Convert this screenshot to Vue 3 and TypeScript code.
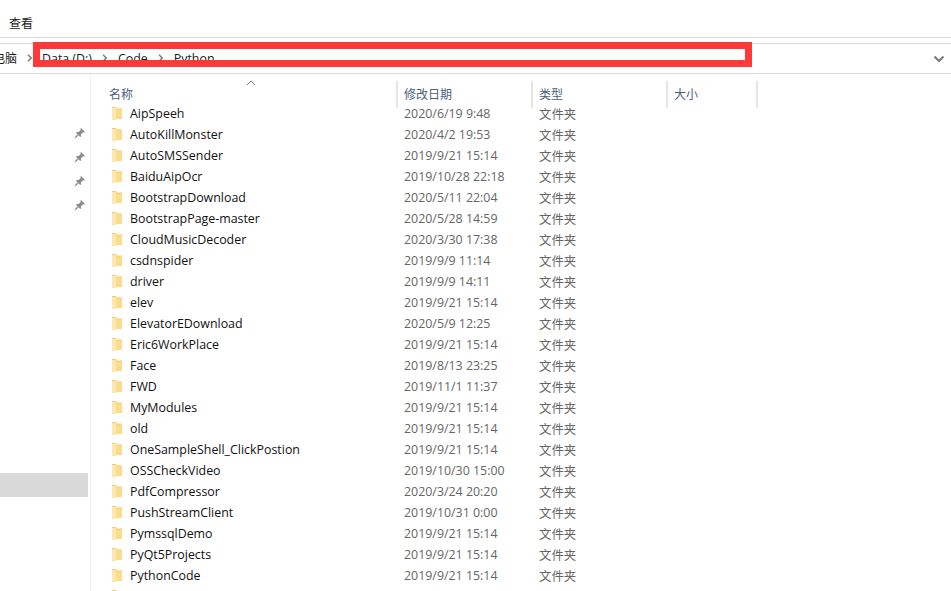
<script setup lang="ts">
const folders: { name: string; date: string }[] = [
  { name: 'AipSpeeh', date: '2020/6/19 9:48' },
  { name: 'AutoKillMonster', date: '2020/4/2 19:53' },
  { name: 'AutoSMSSender', date: '2019/9/21 15:14' },
  { name: 'BaiduAipOcr', date: '2019/10/28 22:18' },
  { name: 'BootstrapDownload', date: '2020/5/11 22:04' },
  { name: 'BootstrapPage-master', date: '2020/5/28 14:59' },
  { name: 'CloudMusicDecoder', date: '2020/3/30 17:38' },
  { name: 'csdnspider', date: '2019/9/9 11:14' },
  { name: 'driver', date: '2019/9/9 14:11' },
  { name: 'elev', date: '2019/9/21 15:14' },
  { name: 'ElevatorEDownload', date: '2020/5/9 12:25' },
  { name: 'Eric6WorkPlace', date: '2019/9/21 15:14' },
  { name: 'Face', date: '2019/8/13 23:25' },
  { name: 'FWD', date: '2019/11/1 11:37' },
  { name: 'MyModules', date: '2019/9/21 15:14' },
  { name: 'old', date: '2019/9/21 15:14' },
  { name: 'OneSampleShell_ClickPostion', date: '2019/9/21 15:14' },
  { name: 'OSSCheckVideo', date: '2019/10/30 15:00' },
  { name: 'PdfCompressor', date: '2020/3/24 20:20' },
  { name: 'PushStreamClient', date: '2019/10/31 0:00' },
  { name: 'PymssqlDemo', date: '2019/9/21 15:14' },
  { name: 'PyQt5Projects', date: '2019/9/21 15:14' },
  { name: 'PythonCode', date: '2019/9/21 15:14' },
  { name: '', date: '' },
]
const pins = [0, 1, 2, 3]
const crumbs = ['Data (D:)', 'Code', 'Python']
</script>

<template>
  <div class="explorer">
    <div class="ribbon"><span>查看</span></div>
    <div class="address">
      <span class="crumb--pc">电脑</span>
      <template v-for="c in crumbs" :key="c">
        <span class="sep">
          <svg width="6" height="8" viewBox="0 0 6 8">
            <path d="M1 .8 4.200 4 1 7.200" fill="none" stroke="#7f7f7f" stroke-width="1.600" />
          </svg>
        </span>
        <span class="crumb">{{ c }}</span>
      </template>
      <svg class="chevron" width="12" height="8" viewBox="0 0 12 8">
        <path d="M1.500 1.500 6 6l4.500-4.500" fill="none" stroke="#777" stroke-width="2" />
      </svg>
      <div class="highlight"></div>
    </div>
    <div class="body">
      <aside class="side">
        <div class="pins">
          <svg v-for="p in pins" :key="p" class="pin" width="12" height="12" viewBox="0 0 12 12">
            <path d="M7 1l4 4-1 .6-1.200-.2L6.900 7.300l.2 1.900-.9.8L2 5.800l.8-.9 1.900.2 1.900-1.900L6.400 2z" fill="#8a8a8a" />
            <path d="M4 8 1.200 10.800" stroke="#8a8a8a" stroke-width="1.300" />
          </svg>
        </div>
        <div class="side__selected"></div>
      </aside>
      <main class="files">
        <div class="head">
          <svg class="sort" width="10" height="6" viewBox="0 0 10 6">
            <path d="M1 5l4-4 4 4" fill="none" stroke="#7d7d7d" stroke-width="1" />
          </svg>
          <div class="head__cell col-name">名称</div>
          <div class="head__cell col-date">修改日期</div>
          <div class="head__cell col-type">类型</div>
          <div class="head__cell col-size">大小</div>
        </div>
        <ul class="rows">
          <li v-for="f in folders" :key="f.name" class="row">
            <svg class="folder" width="10" height="13" viewBox="0 0 10 13">
              <path d="M0 0h4l1 1.500h5V12H0z" fill="#f3cf73" />
              <path d="M0 1h3.500l1 1.500V13H0z" fill="#fde9b0" />
              <path d="M4.500 2.500H10V12H4.500z" fill="#f9dc8c" />
            </svg>
            <span class="col-name name">{{ f.name }}</span>
            <span class="col-date meta">{{ f.date }}</span>
            <span class="col-type meta">{{ f.name ? '文件夹' : '' }}</span>
          </li>
        </ul>
      </main>
    </div>
  </div>
</template>

<style>
html,
body {
  margin: 0;
  background: #fff;
  overflow: hidden;
}
</style>

<style scoped>
.explorer {
  width: 951px;
  height: 591px;
  overflow: hidden;
  display: flex;
  flex-direction: column;
  font-family: 'Open Sans', 'Noto Sans CJK SC', sans-serif;
  font-size: 12.4px;
  color: #1a1a1a;
}

.ribbon {
  height: 38px;
  box-sizing: border-box;
  padding: 16px 0 0 9px;
  line-height: 16px;
  font-size: 12px;
  border-bottom: 1px solid #d9d9d9;
}

.address {
  position: relative;
  margin-top: 5px;
  height: 31px;
  box-sizing: border-box;
  border-top: 1px solid #d9d9d9;
  border-bottom: 1px solid #d9d9d9;
  display: flex;
  align-items: center;
  padding-bottom: 1px;
}

.crumb {
  margin-right: 1px;
}

.crumb--pc {
  margin-left: -7px;
  font-size: 12px;
}

.sep {
  width: 25px;
  display: flex;
  justify-content: center;
  align-items: center;
}

.chevron {
  position: absolute;
  right: 6px;
  top: 11px;
}

.highlight {
  position: absolute;
  left: 33px;
  top: -2px;
  width: 719px;
  height: 25px;
  box-sizing: border-box;
  border: 7px solid #ff3838;
}

.body {
  flex: 1;
  display: flex;
  min-height: 0;
}

.side {
  width: 90px;
  flex: none;
  position: relative;
  border-right: 1px solid #f0f0f0;
}

.pins {
  display: flex;
  flex-direction: column;
  align-items: flex-end;
  gap: 12px;
  padding: 53px 4px 0 0;
}

.pin {
  display: block;
}

.side__selected {
  position: absolute;
  left: 0;
  top: 399px;
  width: 88px;
  height: 24px;
  background: #d9d9d9;
}

.files {
  flex: 1;
  min-width: 0;
}

.head {
  margin-top: 7px;
  height: 27px;
  display: flex;
  padding-left: 18px;
  position: relative;
  color: #4c607a;
  font-size: 12px;
}

.sort {
  position: absolute;
  left: 155px;
  top: -1px;
}

.head__cell {
  box-sizing: border-box;
  line-height: 28px;
  border-right: 2px solid #e5e5e5;
  height: 27px;
}

.rows {
  list-style: none;
  margin: -5px 0 0;
  padding: 0 0 0 18px;
}

.row {
  display: flex;
  align-items: center;
  height: 21px;
  position: relative;
}

.folder {
  position: absolute;
  left: 3px;
  top: 4px;
}

.col-name {
  width: 289px;
  flex: none;
  box-sizing: border-box;
}

.col-date {
  width: 135px;
  flex: none;
  padding-left: 6px;
  box-sizing: border-box;
}

.col-type {
  width: 135px;
  flex: none;
  padding-left: 6px;
  box-sizing: border-box;
}

.col-size {
  width: 90px;
  flex: none;
  padding-left: 6px;
  box-sizing: border-box;
}

.name {
  padding-left: 21px;
  color: #111;
}

.meta {
  color: #666;
}
</style>
